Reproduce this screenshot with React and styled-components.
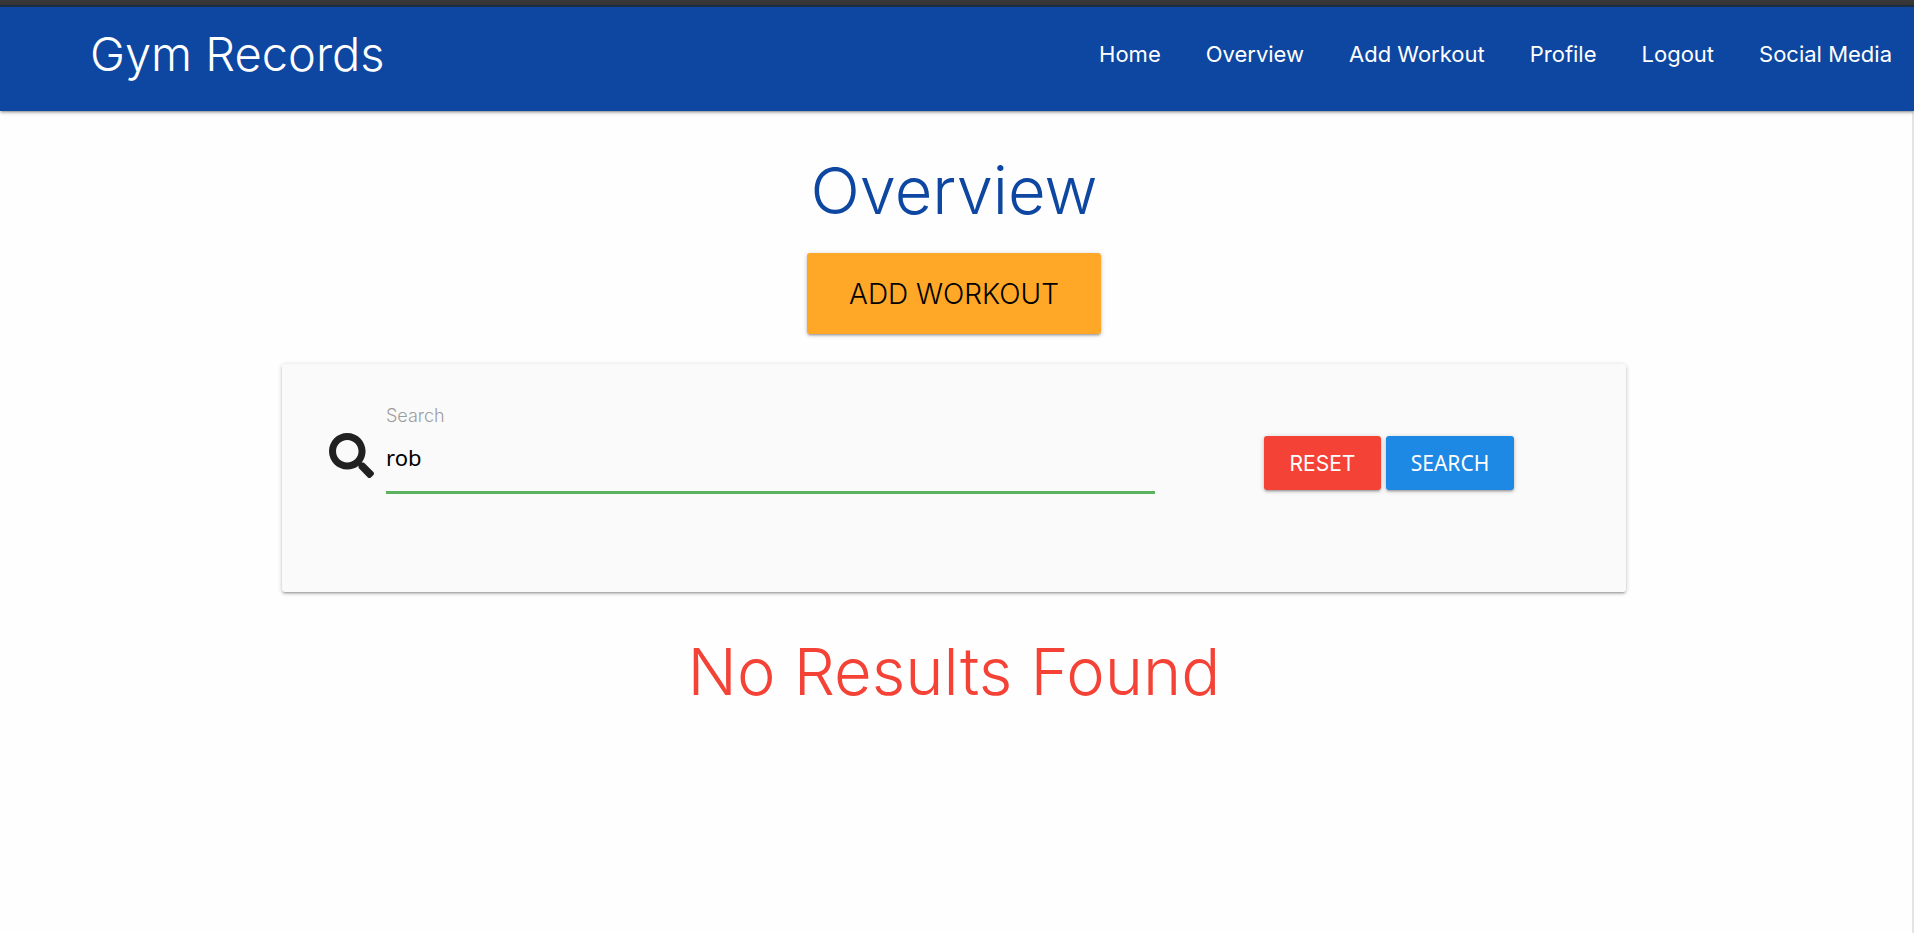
import React, { useState } from "react";
import styled, { createGlobalStyle } from "styled-components";

const display = `Inter, Lato, sans-serif`;
const body = `"Noto Sans", "Open Sans", sans-serif`;
const raised = `0 2px 2px 0 rgba(0,0,0,0.14), 0 3px 1px -2px rgba(0,0,0,0.12), 0 1px 5px 0 rgba(0,0,0,0.2)`;

const GlobalStyle = createGlobalStyle`
  *, *::before, *::after { box-sizing: border-box; }
  body {
    margin: 0;
    background: #fefefe;
    font-family: ${display};
    color: rgba(0, 0, 0, 0.87);
  }
`;

const Page = styled.div`
  display: flex;
  flex-direction: column;
  min-height: 100vh;
  border-top: 5px solid #383838;
`;

const NavBar = styled.header`
  display: flex;
  align-items: center;
  justify-content: space-between;
  flex-wrap: wrap;
  min-height: 106px;
  padding: 0 22px 10px 90px;
  border-top: 2px solid #1c2c40;
  background: #0d47a1;
  box-shadow: ${raised};
  z-index: 1;
`;

const Brand = styled.a`
  color: #fff;
  font-size: 47px;
  font-weight: 300;
  line-height: 64px;
  text-decoration: none;
`;

const Links = styled.ul`
  display: flex;
  flex-wrap: wrap;
  gap: 0 45px;
  margin: 0;
  padding: 0;
  list-style: none;
`;

const NavLink = styled.a`
  display: block;
  color: #fff;
  font-size: 22px;
  font-weight: 400;
  line-height: 64px;
  text-decoration: none;
`;

const Content = styled.main`
  display: flex;
  flex: 1;
  flex-direction: column;
  align-items: center;
  padding: 44px 4px 0 0;
  border-right: 2px solid #e4e4e4;
`;

const Heading = styled.h1`
  margin: 0;
  color: ${(p) => p.$color};
  font-size: 65px;
  font-weight: 300;
  line-height: 72px;
  text-align: center;
`;

const Button = styled.button`
  display: inline-flex;
  align-items: center;
  justify-content: center;
  min-width: ${(p) => p.$width};
  height: 54px;
  padding: 0 22px;
  border: 0;
  border-radius: 3px;
  background: ${(p) => p.$bg};
  box-shadow: ${raised};
  color: #fff;
  font-family: ${(p) => p.$font || display};
  font-size: 21px;
  text-transform: uppercase;
  cursor: pointer;
`;

const LargeButton = styled(Button)`
  height: 81px;
  margin: 26px 0 30px;
  color: #000;
  font-size: 28px;
  font-weight: 300;
`;

const SearchCard = styled.form`
  display: flex;
  width: 90%;
  max-width: 1344px;
  min-height: 228px;
  margin-bottom: 44px;
  padding: 40px 112px 98px 46px;
  border-radius: 3px;
  background: #fafafa;
  box-shadow: ${raised};
`;

const Field = styled.div`
  display: grid;
  flex: 1;
  max-width: 827px;
  grid-template-columns: 58px 1fr;
  grid-template-rows: 24px 1fr;
`;

const Label = styled.label`
  grid-column: 2;
  color: #9e9e9e;
  font-size: 18px;
  font-weight: 300;
  line-height: 24px;
`;

const SearchIcon = styled.svg`
  width: 45px;
  height: 45px;
  margin: 5px 0 0 1px;
`;

const TextInput = styled.input`
  width: 100%;
  height: 66px;
  padding: 0 0 6px;
  border: 0;
  border-bottom: 3px solid #5bb25f;
  outline: 0;
  background: transparent;
  color: #000;
  font-family: ${body};
  font-size: 22px;
`;

const Actions = styled.div`
  display: flex;
  align-items: flex-start;
  gap: 5px;
  margin-left: auto;
  padding-top: 32px;
`;

const navItems = ["Home", "Overview", "Add Workout", "Profile", "Logout", "Social Media"];

export default function App() {
  const [query, setQuery] = useState("rob");
  return (
    <Page>
      <GlobalStyle />
      <NavBar>
        <Brand href="#">Gym Records</Brand>
        <nav>
          <Links>
            {navItems.map((item) => (
              <li key={item}>
                <NavLink href="#">{item}</NavLink>
              </li>
            ))}
          </Links>
        </nav>
      </NavBar>
      <Content>
        <Heading $color="#0d47a1">Overview</Heading>
        <LargeButton type="button" $bg="#ffa726" $width="294px">
          Add Workout
        </LargeButton>
        <SearchCard onSubmit={(e) => e.preventDefault()}>
          <Field>
            <Label htmlFor="query">Search</Label>
            <SearchIcon viewBox="0 0 512 512" fill="#212121" aria-hidden="true">
              <path d="M505 442.7L405.3 343c-4.500-4.500-10.600-7-17-7H372c27.600-35.300 44-79.700 44-128C416 93.100 322.900 0 208 0S0 93.100 0 208s93.100 208 208 208c48.300 0 92.700-16.400 128-44v16.300c0 6.400 2.500 12.500 7 17l99.700 99.700c9.400 9.400 24.600 9.400 33.900 0l28.300-28.300c9.400-9.400 9.400-24.600.1-34zM208 336c-70.700 0-128-57.200-128-128 0-70.700 57.200-128 128-128 70.700 0 128 57.200 128 128 0 70.700-57.200 128-128 128z" />
            </SearchIcon>
            <TextInput id="query" type="text" value={query} onChange={(e) => setQuery(e.target.value)} />
          </Field>
          <Actions>
            <Button type="button" $bg="#f44336" $width="117px" onClick={() => setQuery("")}>
              Reset
            </Button>
            <Button type="submit" $bg="#1e88e5" $width="128px" $font={body}>
              Search
            </Button>
          </Actions>
        </SearchCard>
        <Heading as="h2" $color="#f44336">No Results Found</Heading>
      </Content>
    </Page>
  );
}
